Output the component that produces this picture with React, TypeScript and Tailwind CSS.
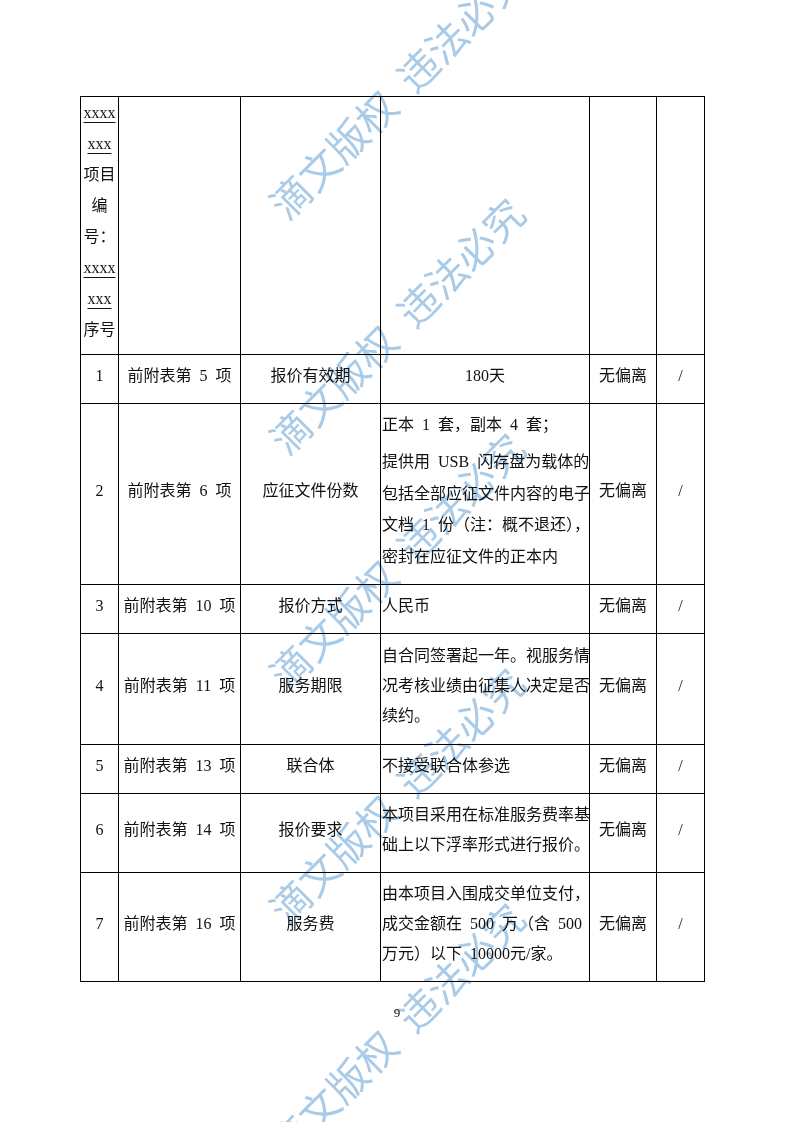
import type { ReactNode } from 'react';

interface Row {
  no: string;
  ref: string;
  item: string;
  body: ReactNode;
  centered?: boolean;
  height: string;
}

const S = '\u2002';

const rows: Row[] = [
  { no: '1', ref: `前附表第${S}5${S}项`, item: '报价有效期', body: '180天', centered: true, height: 'h-[49px]' },
  {
    no: '2',
    ref: `前附表第${S}6${S}项`,
    item: '应征文件份数',
    height: 'h-[181px]',
    body: (
      <>
        <div>正本{S}1{S}套，副本{S}4{S}套；</div>
        <div className="mt-[6px] leading-[31.5px]">
          提供用{S}USB{S}闪存盘为载体的
          <br />
          包括全部应征文件内容的电子
          <br />
          文档{S}1{S}份（注：概不退还），
          <br />
          密封在应征文件的正本内
        </div>
      </>
    ),
  },
  { no: '3', ref: `前附表第${S}10${S}项`, item: '报价方式', body: '人民币', height: 'h-[49px]' },
  {
    no: '4',
    ref: `前附表第${S}11${S}项`,
    item: '服务期限',
    height: 'h-[111px]',
    body: (
      <>
        自合同签署起一年。视服务情
        <br />
        况考核业绩由征集人决定是否
        <br />
        续约。
      </>
    ),
  },
  { no: '5', ref: `前附表第${S}13${S}项`, item: '联合体', body: '不接受联合体参选', height: 'h-[49px]' },
  {
    no: '6',
    ref: `前附表第${S}14${S}项`,
    item: '报价要求',
    height: 'h-[79px]',
    body: (
      <>
        本项目采用在标准服务费率基
        <br />
        础上以下浮率形式进行报价。
      </>
    ),
  },
  {
    no: '7',
    ref: `前附表第${S}16${S}项`,
    item: '服务费',
    height: 'h-[109px]',
    body: (
      <>
        由本项目入围成交单位支付，
        <br />
        成交金额在{S}500{S}万（含{S}500
        <br />
        万元）以下{S}10000元/家。
      </>
    ),
  },
];

const cell = 'border border-black text-center align-middle pt-[6px] pb-[12px] px-0';
const textCell = 'border border-black text-left align-middle pt-[6px] pb-[12px] pl-[1px] pr-0 whitespace-nowrap';

export default function App() {
  return (
    <div className="relative w-[794px] h-[1122px] overflow-hidden bg-white text-[#111] font-['Liberation_Serif','Noto_Sans_CJK_SC',serif]">
      <table className="ml-[80px] mt-[96px] w-[624px] table-fixed border-collapse text-[16px] leading-[30px]">
        <colgroup>
          <col className="w-[38px]" />
          <col className="w-[122px]" />
          <col className="w-[140px]" />
          <col className="w-[209px]" />
          <col className="w-[67px]" />
          <col className="w-[48px]" />
        </colgroup>
        <tbody>
          {/* top row: continuation of the previous page */}
          <tr className="h-[258px]">
            <td className="border border-black text-center align-top pt-0 pb-[9px] px-[2px] leading-[31px]">
              <span className="underline underline-offset-[4px]">xxxx</span>
              <br />
              <span className="underline underline-offset-[4px]">xxx</span>
              <br />
              项目
              <br />
              编
              <br />
              号：
              <br />
              <span className="underline underline-offset-[4px]">xxxx</span>
              <br />
              <span className="underline underline-offset-[4px]">xxx</span>
              <br />
              序号
            </td>
            <td className="border border-black" />
            <td className="border border-black" />
            <td className="border border-black" />
            <td className="border border-black" />
            <td className="border border-black" />
          </tr>
          {rows.map((row) => (
            <tr key={row.no} className={row.height}>
              <td className={cell}>{row.no}</td>
              <td className={cell}>{row.ref}</td>
              <td className={cell}>{row.item}</td>
              <td className={row.centered ? cell : textCell}>{row.body}</td>
              <td className={cell}>无偏离</td>
              <td className={cell}>/</td>
            </tr>
          ))}
        </tbody>
      </table>

      <div className="mt-[24px] text-center text-[13px] leading-[14px]">9</div>

      {/* watermark */}
      <div className="pointer-events-none absolute inset-0 font-['Noto_Sans_CJK_SC',sans-serif]">
        {[0, 1, 2, 3, 4].map((k) => (
          <div
            key={k}
            className="absolute left-[396px] -translate-x-1/2 -translate-y-1/2 -rotate-45 whitespace-nowrap text-[40px] leading-none text-[#a9cbe8] mix-blend-multiply"
            style={{ top: 90 + 235 * k }}
          >
            滴文版权{S}违法必究
          </div>
        ))}
      </div>
    </div>
  );
}
